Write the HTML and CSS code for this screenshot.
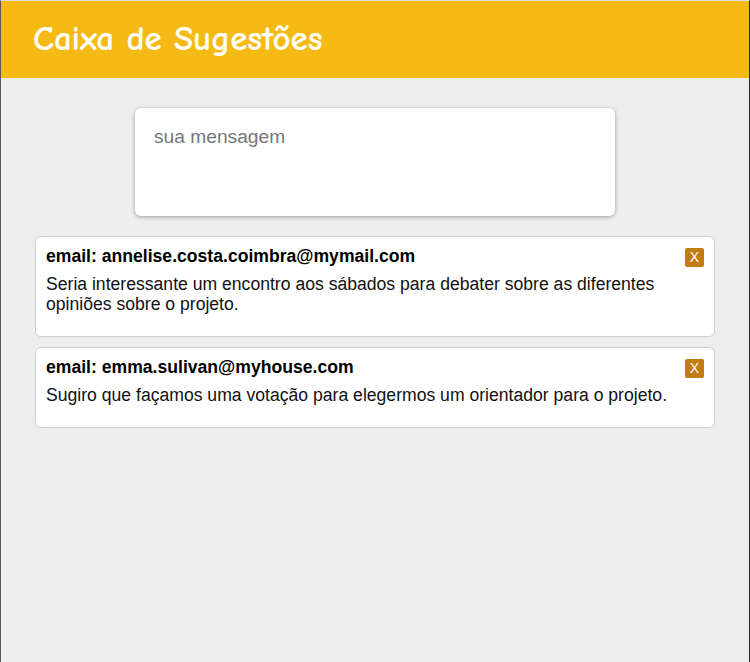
FILE: index.html
```html
<!DOCTYPE html>
<html lang="pt">
<head>
<meta charset="utf-8">
<title>Caixa de Sugestões</title>
<link rel="stylesheet" href="styles.css">
</head>
<body>
<header class="topbar">
  <h1 class="title">Caixa de Sugestões</h1>
</header>
<main class="content">
  <div class="composer">
    <textarea class="message-input" placeholder="sua mensagem"></textarea>
  </div>
  <ul class="list">
    <li class="card">
      <div class="card-head">
        <span class="card-email">email: annelise.costa.coimbra@mymail.com</span>
        <button class="remove">X</button>
      </div>
      <p class="card-text">Seria interessante um encontro aos sábados para debater sobre as diferentes opiniões sobre o projeto.</p>
    </li>
    <li class="card">
      <div class="card-head">
        <span class="card-email">email: emma.sulivan@myhouse.com</span>
        <button class="remove">X</button>
      </div>
      <p class="card-text">Sugiro que façamos uma votação para elegermos um orientador para o projeto.</p>
    </li>
  </ul>
</main>
</body>
</html>
```
FILE: styles.css
```css
* { box-sizing: border-box; }
html { background: #eeeeee; }
body {
  margin: 0;
  min-height: 662px;
  background: #eeeeee;
  border-top: 1px solid #dcdcdc;
  border-left: 1px solid #585858;
  border-right: 1px solid #2a2a2a;
  font-family: "Liberation Sans", Arial, sans-serif;
  color: #111;
}
.topbar {
  background: #f6ba16;
  height: 77px;
  display: flex;
  align-items: center;
  padding-left: 32px;
}
.title {
  margin: 0 0 2px;
  color: #fff;
  font-family: "Comic Sans MS", "Comic Neue", cursive;
  font-weight: bold;
  font-size: 35px;
  letter-spacing: -0.1px;
}
.content {
  padding-top: 30px;
  display: flex;
  flex-direction: column;
  align-items: center;
}
.composer { display: flex; justify-content: center; }
.message-input {
  width: 480px;
  height: 108px;
  border: none;
  border-radius: 6px;
  background: #fff;
  box-shadow: 0 1px 4px rgba(0,0,0,0.35);
  padding: 18px 18px 18px 19px;
  font-family: "Liberation Sans", Arial, sans-serif;
  font-size: 19.2px;
  line-height: 22px;
  color: #333;
  resize: none;
  outline: none;
  display: block;
}
.message-input::placeholder { color: #777; }
.list {
  list-style: none;
  margin: 20px 0 0;
  padding: 0;
  width: 680px;
  display: flex;
  flex-direction: column;
  gap: 10px;
}
.card {
  background: #fff;
  border: 1px solid #cfcfcf;
  border-radius: 6px;
  padding: 9px 10px 10px 10px;
}
.card-head {
  display: flex;
  justify-content: space-between;
  align-items: center;
  height: 20px;
}
.card-email {
  font-weight: bold;
  font-size: 17.6px;
  color: #000;
}
.remove {
  width: 19px;
  height: 19px;
  margin-top: 2px;
  border: none;
  border-radius: 2px;
  background: #c27c14;
  color: #fff;
  font-family: "Liberation Sans", Arial, sans-serif;
  font-size: 14px;
  line-height: 19px;
  padding: 0;
  text-align: center;
}
.card-text {
  margin: 8px 0 12px;
  font-size: 17.6px;
  line-height: 20px;
  color: #111;
}
```
